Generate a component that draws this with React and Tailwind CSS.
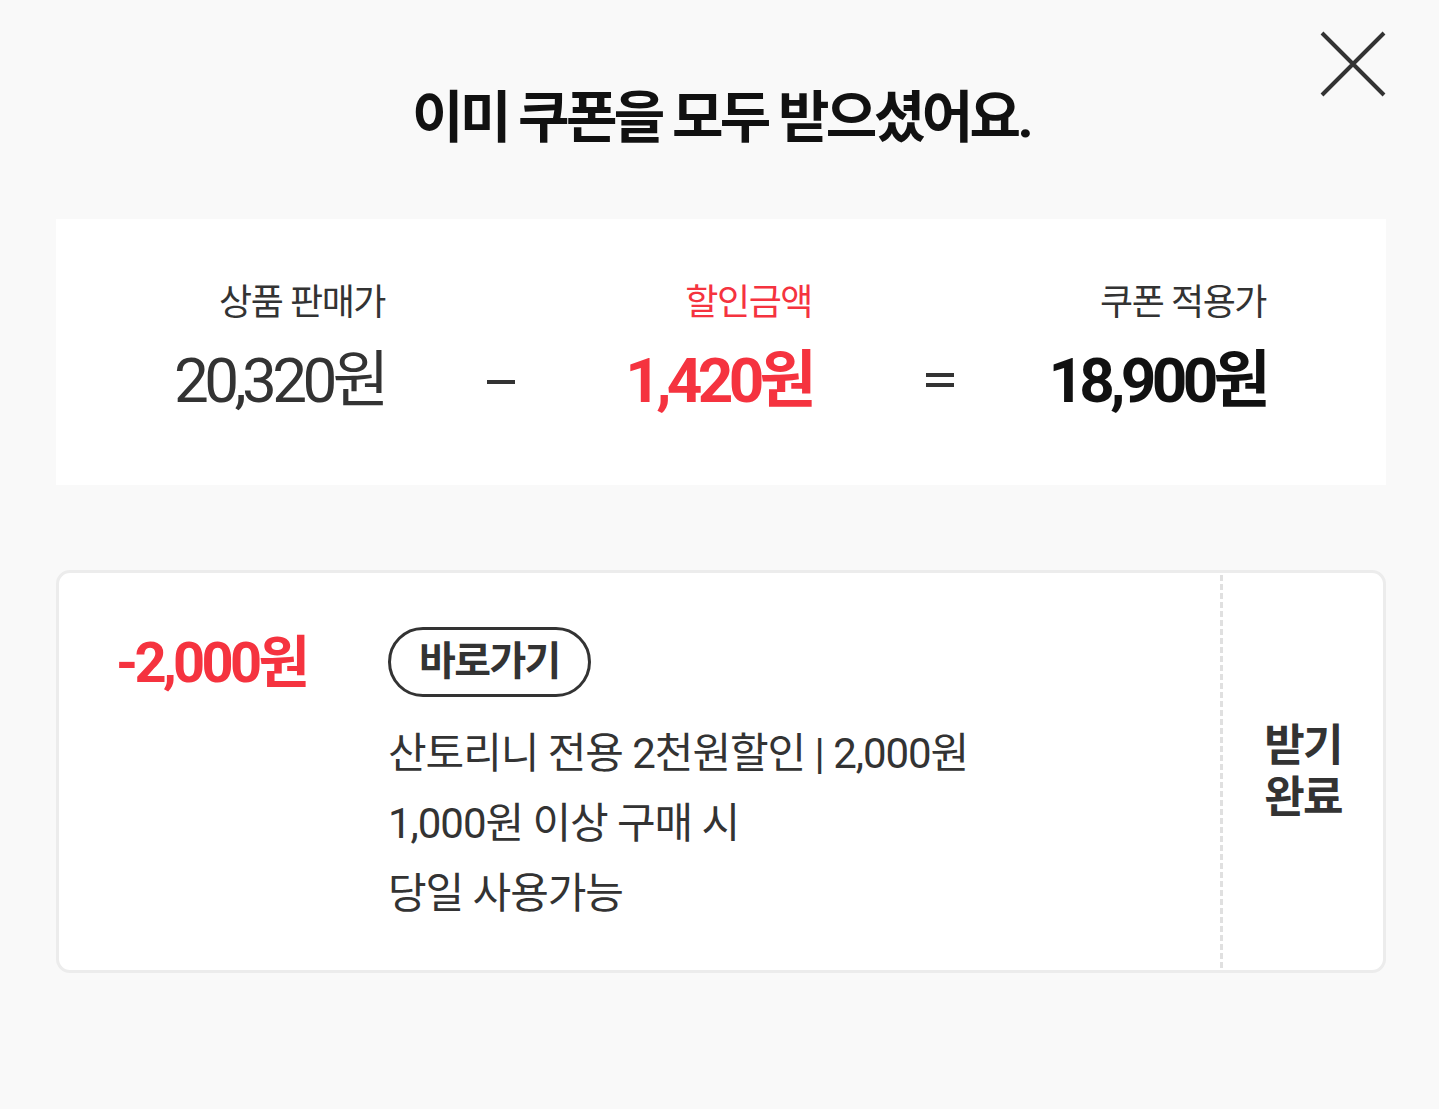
const FONT = "font-['Roboto','Noto_Sans_CJK_KR',sans-serif]";

const PriceCol = ({ label, value, labelColor, valueColor, weight }) => (
  <div className="flex flex-col items-end whitespace-nowrap">
    <p className={`text-[36px] leading-[44px] tracking-[-0.04em] ${labelColor}`}>{label}</p>
    <p className={`mt-[20px] text-[62px] leading-[72px] tracking-[-0.075em] ${weight} ${valueColor}`}>{value}</p>
  </div>
);

const Minus = () => (
  <div className="flex h-[150px] items-end justify-center pb-[47px]">
    <span className="h-[4px] w-[28px] bg-[#333]" />
  </div>
);

const Equals = () => (
  <div className="flex h-[150px] items-end justify-center pb-[44px]">
    <div className="flex flex-col gap-[6px]">
      <span className="h-[4px] w-[28px] bg-[#333]" />
      <span className="h-[4px] w-[28px] bg-[#333]" />
    </div>
  </div>
);

const App = () => {
  return (
    <div className={`relative min-h-screen bg-[#f9f9f9] pl-[56px] pr-[53px] ${FONT}`}>
      <button className="absolute right-[52px] top-[30px] text-[#333]">
        <svg width="68" height="68" viewBox="0 0 68 68" fill="none" stroke="currentColor" strokeWidth="4">
          <path d="M3 3 L65 65 M65 3 L3 65" />
        </svg>
      </button>

      <h1 className="pt-[82px] text-center text-[56px] font-bold leading-[72px] tracking-[-0.065em] text-[#111]">
        이미 쿠폰을 모두 받으셨어요.
      </h1>

      <div className="mt-[65px] grid h-[266px] grid-cols-[329px_232px_195px_256px_198px] items-start bg-white pt-[62px]">
        <PriceCol label="상품 판매가" value="20,320원" labelColor="text-[#333]" valueColor="text-[#333]" weight="font-normal" />
        <Minus />
        <PriceCol label="할인금액" value="1,420원" labelColor="text-[#f5333f]" valueColor="text-[#f5333f]" weight="font-bold" />
        <Equals />
        <PriceCol label="쿠폰 적용가" value="18,900원" labelColor="text-[#333]" valueColor="text-[#111]" weight="font-bold" />
      </div>

      <div className="mt-[85px] flex h-[403px] rounded-[14px] border-[3px] border-[#ececec] bg-white">
        <div className="flex flex-1 pl-[57px] pt-[54px]">
          <p className="w-[272px] text-[56px] font-bold leading-[72px] tracking-[-0.065em] text-[#f5333f]">-2,000원</p>
          <div>
            <span className="inline-flex h-[70px] items-center rounded-full border-[3px] border-[#333] px-[28px] text-[40px] font-bold tracking-[-0.04em] text-[#333]">
              바로가기
            </span>
            <div className="mt-[22px] text-[42px] leading-[70px] tracking-[-0.025em] text-[#333]">
              <p>산토리니 전용 2천원할인 | 2,000원</p>
              <p>1,000원 이상 구매 시</p>
              <p>당일 사용가능</p>
            </div>
          </div>
        </div>
        <div className="my-[2px] border-l-[3px] border-dashed border-[#e0e0e0]" />
        <div className="flex w-[160px] items-center justify-center">
          <p className="text-center text-[44px] font-bold leading-[52px] tracking-[-0.04em] text-[#333]">
            받기
            <br />
            완료
          </p>
        </div>
      </div>
    </div>
  );
};

export default App;
